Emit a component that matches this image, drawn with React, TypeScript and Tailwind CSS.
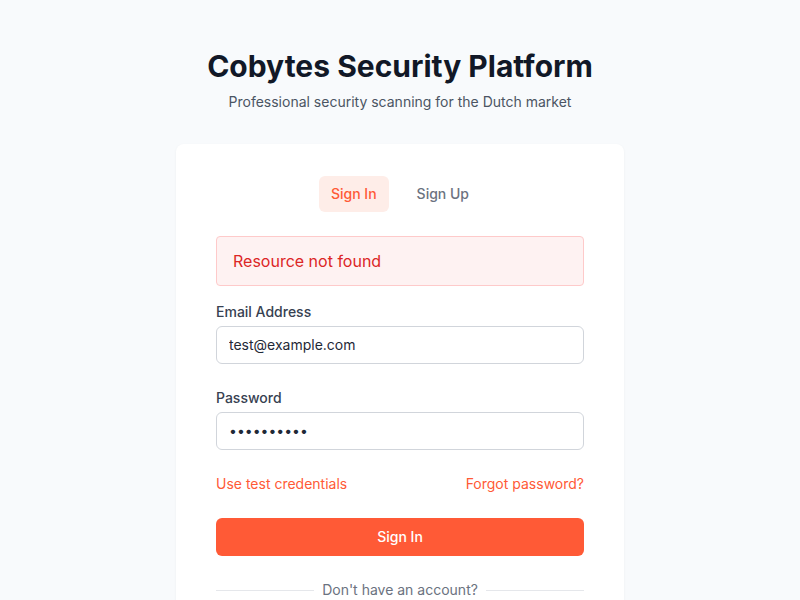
import { useState } from "react";

export default function App() {
  const [tab, setTab] = useState<"signin" | "signup">("signin");
  const [email, setEmail] = useState("test@example.com");
  const [password, setPassword] = useState("testpass12");

  return (
    <div
      className="min-h-screen bg-[#f8fafc] flex flex-col items-center pt-[46px]"
      style={{ fontFamily: "Inter, 'Noto Sans', sans-serif" }}
    >
      <h1 className="text-[30px] leading-10 font-bold text-[#111827]">
        Cobytes Security Platform
      </h1>
      <p className="mt-[6px] text-sm leading-5 text-[#4b5563]">
        Professional security scanning for the Dutch market
      </p>

      <div className="mt-[32px] w-[448px] bg-white rounded-lg shadow-[0_1px_3px_rgba(0,0,0,0.05)] px-10 pt-8 pb-10">
        {/* Tabs */}
        <div className="flex justify-center gap-4">
          <button
            onClick={() => setTab("signin")}
            className={
              tab === "signin"
                ? "px-3 py-2 rounded-md text-sm leading-5 font-medium bg-[#feede8] text-[#ff5a36]"
                : "px-3 py-2 rounded-md text-sm leading-5 font-medium text-[#6b7280]"
            }
          >
            Sign In
          </button>
          <button
            onClick={() => setTab("signup")}
            className={
              tab === "signup"
                ? "px-3 py-2 rounded-md text-sm leading-5 font-medium bg-[#feede8] text-[#ff5a36]"
                : "px-3 py-2 rounded-md text-sm leading-5 font-medium text-[#6b7280]"
            }
          >
            Sign Up
          </button>
        </div>

        {/* Error */}
        <div className="mt-6 px-4 py-3 bg-[#fef2f2] border border-[#fecaca] rounded text-base leading-6 text-[#dc2626]">
          Resource not found
        </div>

        <form className="mt-4" onSubmit={(e) => e.preventDefault()}>
          <div>
            <label className="block text-sm leading-5 font-medium text-[#374151] mb-1">
              Email Address
            </label>
            <input
              type="email"
              value={email}
              onChange={(e) => setEmail(e.target.value)}
              className="w-full px-3 py-2 border border-[#d1d5db] rounded-md text-sm leading-5 text-[#1f2937] focus:outline-none"
            />
          </div>

          <div className="mt-6">
            <label className="block text-sm leading-5 font-medium text-[#374151] mb-1">
              Password
            </label>
            <input
              type="password"
              value={password}
              onChange={(e) => setPassword(e.target.value)}
              className="w-full px-3 py-2 border border-[#d1d5db] rounded-md text-sm leading-5 text-[#1f2937] focus:outline-none"
            />
          </div>

          <div className="mt-6 flex justify-between text-sm leading-5 text-[#ff5a36]">
            <button type="button">Use test credentials</button>
            <button type="button">Forgot password?</button>
          </div>

          <button
            type="submit"
            className="mt-6 w-full py-2 rounded-md bg-[#ff5a36] text-white text-sm leading-[22px] font-medium"
          >
            Sign In
          </button>
        </form>

        <div className="mt-6 flex items-center gap-2">
          <div className="flex-1 h-px bg-[#e5e7eb]" />
          <span className="text-sm leading-5 text-[#6b7280]">Don't have an account?</span>
          <div className="flex-1 h-px bg-[#e5e7eb]" />
        </div>
      </div>
    </div>
  );
}
